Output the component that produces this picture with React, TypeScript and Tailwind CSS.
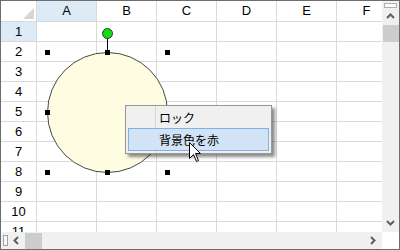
import React from 'react';

const columns = ['A', 'B', 'C', 'D', 'E', 'F'];
const rows = [1, 2, 3, 4, 5, 6, 7, 8, 9, 10, 11];

// handle centres around the selected ellipse, in page pixels
const handles = [
  [47, 52], [107, 52], [167, 52],
  [47, 112], [167, 112],
  [47, 172], [107, 172], [167, 172],
];

const Chevron: React.FC<{ dir: 'up' | 'down' | 'left' | 'right' }> = ({ dir }) => {
  const d = {
    up: 'M1 6 L4.5 2.5 L8 6',
    down: 'M1 3 L4.5 6.5 L8 3',
    left: 'M6 1 L2.5 4.5 L6 8',
    right: 'M3 1 L6.5 4.5 L3 8',
  }[dir];
  return (
    <svg width="9" height="9" viewBox="0 0 9 9">
      <path d={d} fill="none" stroke="#606060" strokeWidth="2" />
    </svg>
  );
};

const App: React.FC = () => {
  return (
    <div
      className="relative w-[400px] h-[250px] border border-[#6e6e6e] bg-white flex overflow-hidden"
      style={{ fontFamily: '"Liberation Sans", "Noto Sans CJK JP", sans-serif' }}
    >
      {/* Sheet + horizontal scrollbar */}
      <div className="w-[381px] h-full flex flex-col">
        <div className="flex-1 overflow-hidden">
          {/* column header */}
          <div className="flex h-[21px]">
            <div className="relative w-[36px] shrink-0 border-r border-b border-[#d9d9d9] bg-white">
              <div className="absolute right-[2px] bottom-[2px] w-0 h-0 border-l-[11px] border-t-[11px] border-l-transparent border-t-transparent border-r-0 border-b-[11px] border-b-[#d6d6d6]" />
            </div>
            {columns.map((c, i) => (
              <div
                key={c}
                className={`w-[60px] shrink-0 border-r border-b border-[#d9d9d9] flex items-center justify-center text-[13px] text-black ${
                  i === 0 ? 'bg-[#ddebf7]' : 'bg-white'
                }`}
              >
                {c}
              </div>
            ))}
          </div>
          {rows.map((r) => (
            <div key={r} className="flex h-[20px]">
              <div
                className={`w-[36px] shrink-0 border-r border-b border-[#d9d9d9] flex items-center justify-center text-[13px] text-black ${
                  r === 1 ? 'bg-[#ddebf7]' : 'bg-white'
                }`}
              >
                {r}
              </div>
              {columns.map((c) => (
                <div key={c} className="w-[60px] shrink-0 border-r border-b border-[#d9d9d9]" />
              ))}
            </div>
          ))}
        </div>
        {/* horizontal scrollbar */}
        <div className="h-[17px] bg-[#f0f0f0] flex items-center">
          <div className="ml-[2px] w-[5px] h-[11px] border border-[#a0a0a0] bg-[#f8f8f8]" />
          <div className="w-[17px] flex justify-center">
            <Chevron dir="left" />
          </div>
          <div className="w-[17px] h-[16px] bg-[#cdcdcd]" />
          <div className="flex-1" />
          <div className="w-[17px] flex justify-center mr-[1px]">
            <Chevron dir="right" />
          </div>
        </div>
      </div>

      {/* vertical scrollbar */}
      <div className="w-[17px] h-full flex flex-col">
        <div className="flex-1 bg-[#f0f0f0] flex flex-col items-center">
          <div className="mt-[2px] w-[13px] h-[5px] border border-[#b0b0b0] bg-[#fafafa]" />
          <div className="h-[17px] flex items-center justify-center">
            <Chevron dir="up" />
          </div>
          <div className="w-[16px] h-[17px] bg-[#cdcdcd]" />
          <div className="flex-1" />
          <div className="h-[17px] flex items-center justify-center mb-[1px]">
            <Chevron dir="down" />
          </div>
        </div>
        <div className="h-[17px] bg-white" />
      </div>

      {/* shape on the sheet */}
      <svg
        className="absolute left-0 top-0 pointer-events-none"
        width="398"
        height="248"
        viewBox="1 1 398 248"
      >
        <circle cx="107.5" cy="112.5" r="60" fill="#fffde1" stroke="#474747" strokeWidth="1" />
        <line x1="107.5" y1="38" x2="107.5" y2="52" stroke="#000" strokeWidth="1" />
        <circle cx="107.5" cy="33.5" r="5" fill="#11dd11" stroke="#3a3a3a" strokeWidth="1" />
        {handles.map(([x, y]) => (
          <rect key={`${x}-${y}`} x={x - 2} y={y - 2} width="5" height="5" fill="#000" />
        ))}
      </svg>

      {/* context menu */}
      <div
        className="absolute left-[124px] top-[104px] w-[147px] h-[49px] border border-[#979797] bg-[#f0f0f0] shadow-[3px_3px_3px_rgba(0,0,0,0.45)] px-[2px] pt-px pb-[2px] flex flex-col text-[12px] text-black"
        style={{ fontFamily: '"Noto Sans CJK JP", "Liberation Sans", sans-serif' }}
      >
        <div className="absolute left-[29px] top-0 bottom-0 w-px bg-[#d7d7d7]" />
        <div className="relative h-[21px] border border-transparent flex items-center pl-[30px]">ロック</div>
        <div className="relative h-[23px] border border-[#7fb0e6] bg-[#d1e3f4] flex items-center pl-[30px]">
          背景色を赤
        </div>
      </div>

      {/* mouse pointer */}
      <svg className="absolute left-[188px] top-[141px] pointer-events-none" width="13" height="21" viewBox="0 0 13 21">
        <path
          d="M0.5 0.5 L0.5 16.5 L4.5 12.5 L7.5 19.5 L9.5 18.5 L6.5 11.5 L11.5 11.5 Z"
          fill="#fff"
          stroke="#000"
          strokeWidth="1"
        />
      </svg>
    </div>
  );
};

export default App;
